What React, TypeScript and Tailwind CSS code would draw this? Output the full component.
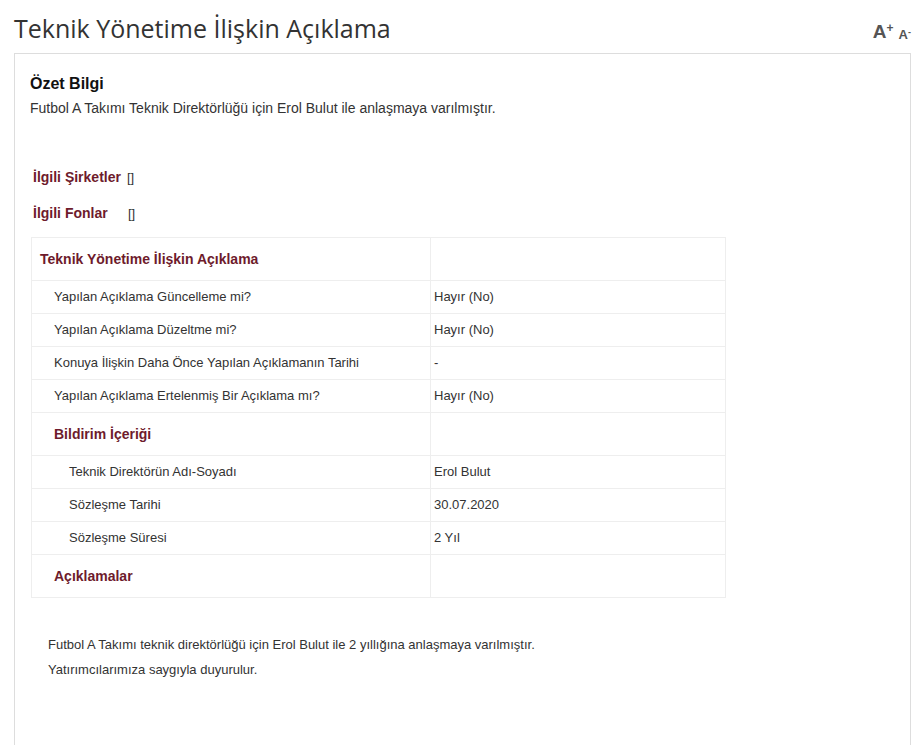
const rows: { label: string; value?: string; kind: "head" | "row"; indent: number }[] = [
  { label: "Teknik Yönetime İlişkin Açıklama", kind: "head", indent: 0 },
  { label: "Yapılan Açıklama Güncelleme mi?", value: "Hayır (No)", kind: "row", indent: 1 },
  { label: "Yapılan Açıklama Düzeltme mi?", value: "Hayır (No)", kind: "row", indent: 1 },
  { label: "Konuya İlişkin Daha Önce Yapılan Açıklamanın Tarihi", value: "-", kind: "row", indent: 1 },
  { label: "Yapılan Açıklama Ertelenmiş Bir Açıklama mı?", value: "Hayır (No)", kind: "row", indent: 1 },
  { label: "Bildirim İçeriği", kind: "head", indent: 1 },
  { label: "Teknik Direktörün Adı-Soyadı", value: "Erol Bulut", kind: "row", indent: 2 },
  { label: "Sözleşme Tarihi", value: "30.07.2020", kind: "row", indent: 2 },
  { label: "Sözleşme Süresi", value: "2 Yıl", kind: "row", indent: 2 },
  { label: "Açıklamalar", kind: "head", indent: 1 },
];

const indentClass = ["pl-[8px]", "pl-[22px]", "pl-[37px]"];

export default function App() {
  return (
    <div className="min-h-screen bg-white text-[#333] font-['Liberation_Sans',Arial,sans-serif]">
      {/* Header */}
      <div className="flex items-end justify-between pl-[14px] pr-[5px] h-[53px] pb-[9px]">
        <h1 className="font-['Open_Sans',sans-serif] text-[25px] leading-[32px] text-[#333]">
          Teknik Yönetime İlişkin Açıklama
        </h1>
        <div className="flex items-start gap-[5px] text-[#555] font-bold mb-[3px]">
          <span className="text-[19px] leading-none">
            A<sup className="text-[12px] -top-[6px] relative align-baseline">+</sup>
          </span>
          <span className="text-[13px] leading-none mt-[6px]">
            A<sup className="text-[9px]">-</sup>
          </span>
        </div>
      </div>

      {/* Panel */}
      <div className="ml-[14px] mr-[5px] border border-[#ddd] border-b-0 h-[692px] pl-[15px] pt-[20px]">
        <h2 className="text-[16px] font-bold leading-[20px] text-[#111]">Özet Bilgi</h2>
        <p className="text-[14px] leading-[17px] mt-[6px] text-[#333]">
          Futbol A Takımı Teknik Direktörlüğü için Erol Bulut ile anlaşmaya varılmıştır.
        </p>

        <div className="mt-[52px] pl-[3px] flex items-center text-[14px] leading-[17px]">
          <span className="font-bold text-[#6e1b2c]">İlgili Şirketler</span>
          <span className="ml-[6px] text-[13px]">[]</span>
        </div>
        <div className="mt-[19px] pl-[3px] flex items-center text-[14px] leading-[17px]">
          <span className="font-bold text-[#6e1b2c] w-[95px]">İlgili Fonlar</span>
          <span className="text-[13px]">[]</span>
        </div>

        {/* Table */}
        <table className="mt-[15px] ml-[1px] w-[695px] border-collapse text-[13px]">
          <tbody>
            {rows.map((r, i) => (
              <tr key={i} className={r.kind === "head" ? "h-[43px]" : "h-[33px]"}>
                <td
                  className={`w-[399px] border border-[#eee] ${indentClass[r.indent]} ${
                    r.kind === "head" ? "font-bold text-[14px] text-[#6e1b2c]" : "text-[#333]"
                  }`}
                >
                  {r.label}
                </td>
                <td className="border border-[#eee] pl-[3px] text-[#333]">{r.value ?? ""}</td>
              </tr>
            ))}
          </tbody>
        </table>

        <div className="mt-[34px] pl-[18px] text-[13px] leading-[25px] text-[#333]">
          <p>Futbol A Takımı teknik direktörlüğü için Erol Bulut ile 2 yıllığına anlaşmaya varılmıştır.</p>
          <p>Yatırımcılarımıza saygıyla duyurulur.</p>
        </div>
      </div>
    </div>
  );
}
